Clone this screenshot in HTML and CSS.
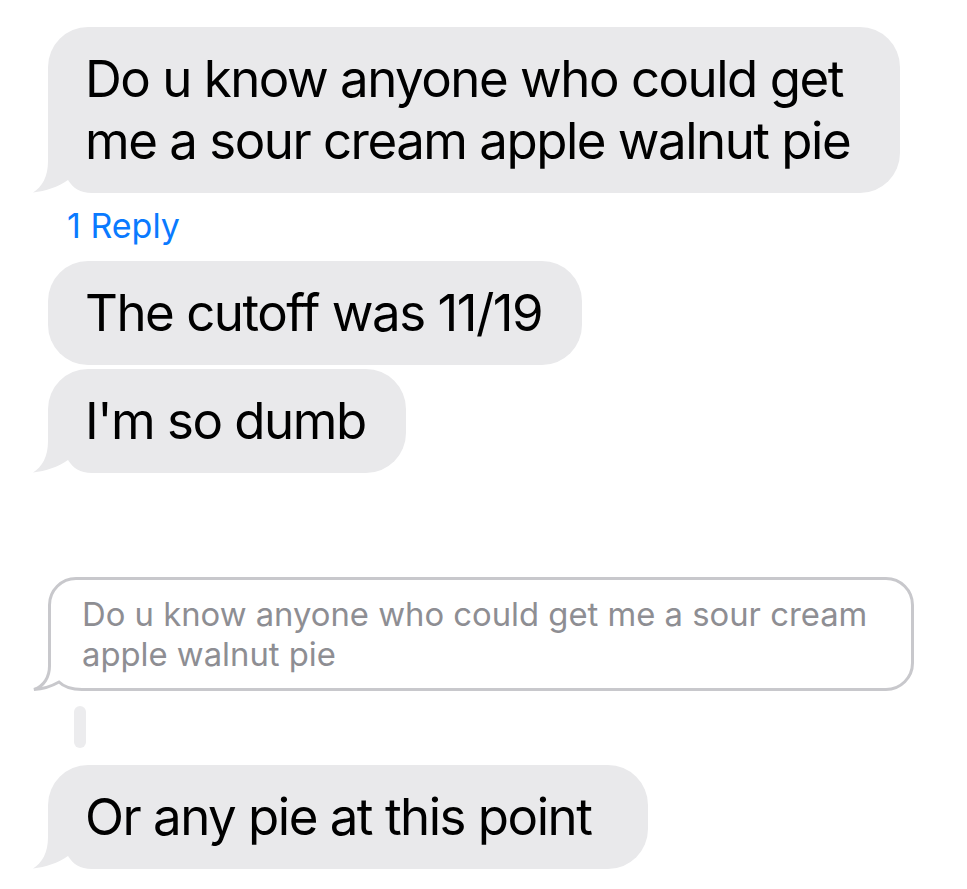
FILE: index.html
```html
<!DOCTYPE html>
<html lang="en">
<head>
	<meta charset="UTF-8">
	<title>Messages</title>
	<link rel="stylesheet" href="styles.css">
</head>
<body>
	<div class="thread">
		<div class="bubble long">
			<span class="text">Do u know anyone who could get me a sour cream apple walnut pie</span>
			<svg class="tail" viewBox="0 0 62 50"><rect x="16" width="46" height="50" fill="#fff"/><path fill="#e9e9eb" d="M16 0V18C16 34 10 44 1 49.5C14 48 26 44 36 37C41 45 48 50 60 50H62V0Z"/></svg>
		</div>
		<div class="reply-count">1 Reply</div>
		<div class="bubble">
			<span class="text">The cutoff was 11/19</span>
		</div>
		<div class="bubble">
			<span class="text">I'm so dumb</span>
			<svg class="tail" viewBox="0 0 62 50"><rect x="16" width="46" height="50" fill="#fff"/><path fill="#e9e9eb" d="M16 0V18C16 34 10 44 1 49.5C14 48 26 44 36 37C41 45 48 50 60 50H62V0Z"/></svg>
		</div>
		<div class="quote">
			<span class="text">Do u know anyone who could get me a sour cream apple walnut pie</span>
			<svg class="tail" viewBox="0 0 62 50"><rect x="16" width="46" height="50" fill="#fff"/><path fill="none" stroke="#c8c8cc" stroke-width="3" d="M17.5 0V25C17.5 36 12 45 2 48.5C12 48 20 45 27 41C32 46 40 48.5 50 48.5H62"/></svg>
		</div>
		<div class="thread-line"></div>
		<div class="bubble pad-end">
			<span class="text">Or any pie at this point</span>
			<svg class="tail" viewBox="0 0 62 50"><rect x="16" width="46" height="50" fill="#fff"/><path fill="#e9e9eb" d="M16 0V18C16 34 10 44 1 49.5C14 48 26 44 36 37C41 45 48 50 60 50H62V0Z"/></svg>
		</div>
	</div>
</body>
</html>
```
FILE: styles.css
```css
*{
	margin: 0;
	padding: 0;
	box-sizing: border-box;
}
body{
	background: #fff;
	font-family: Inter, "Liberation Sans", sans-serif;
}
	.thread{
		display: flex;
		flex-direction: column;
		align-items: flex-start;
		padding: 27px 0 0 48px;
	}
	.text{
		position: relative;
		z-index: 1;
	}
	.tail{
		position: absolute;
		left: -16px;
		bottom: 0;
		width: 62px;
		height: 50px;
	}
	.bubble{
		position: relative;
		max-width: 852px;
		padding: 21px 40px 21px 37px;
		background: #e9e9eb;
		border-radius: 40px;
		font-size: 51px;
		line-height: 62px;
		color: #000;
		letter-spacing: -1.5px;
	}
	.bubble + .bubble{
		margin-top: 4px;
	}
	.long{
		padding-right: 44px;
	}
	.pad-end{
		padding-right: 57px;
	}
	.reply-count{
		margin: 13px 0 15px 19px;
		font-size: 34px;
		line-height: 40px;
		color: #0a7aff;
	}
	.quote{
		position: relative;
		width: 866px;
		margin-top: 104px;
		padding: 14px 20px 14px 31px;
		border: 3px solid #c8c8cc;
		border-radius: 28px;
		font-size: 32.8px;
		line-height: 40px;
		color: #8e8e93;
	}
	.quote .tail{
		left: -19px;
		bottom: -3px;
	}
	.thread-line{
		width: 12px;
		height: 42px;
		margin: 15px 0 0 26px;
		border-radius: 6px;
		background: #ececee;
	}
	.thread-line + .bubble{
		margin-top: 17px;
	}
```
